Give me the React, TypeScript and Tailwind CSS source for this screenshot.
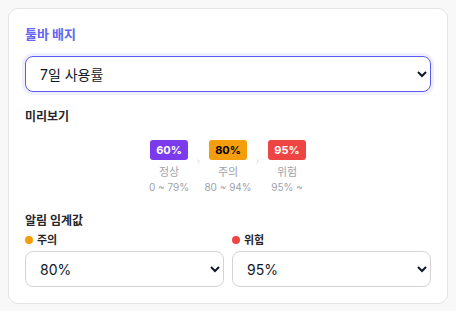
import { ChevronRight } from 'lucide-react'

const tiers = [
  { value: '60%', label: '정상', range: '0 ~ 79%', badge: 'bg-[#7c3aed] text-white' },
  { value: '80%', label: '주의', range: '80 ~ 94%', badge: 'bg-[#f59e0b] text-black' },
  { value: '95%', label: '위험', range: '95% ~', badge: 'bg-[#ef4444] text-white' },
]

export default function App() {
  return (
    <div
      className="min-h-[311px] bg-[#f8f8f8] p-2"
      style={{ fontFamily: 'Inter, "Noto Sans CJK KR", sans-serif' }}
    >
      <div className="rounded-[10px] border border-[#e4e4e7] bg-white px-4 pt-4 pb-4">
        <div className="text-[13px] font-bold leading-[18px] text-[#6366f1]">툴바 배지</div>
        <select
          defaultValue="7d"
          className="mt-[13px] block h-9 w-full rounded-lg border border-[#5b5bf0] bg-white pr-3 pl-[10px] text-[14px] text-[#111827] ring-[3px] ring-[#6366f1]/10 outline-none"
        >
          <option value="7d">7일 사용률</option>
          <option value="30d">30일 사용률</option>
        </select>

        <div className="mt-[15px] text-[12px] font-bold leading-5 text-[#27272a]">미리보기</div>
        <div className="mt-[13px] flex items-start justify-center gap-[7px]">
          {tiers.map((t, i) => (
            <div key={t.value} className="flex items-start gap-[7px]">
              {i > 0 ? (
                <ChevronRight className="mt-[18px] h-[7px] w-[7px] text-[#d4d4d8]" strokeWidth={3} />
              ) : null}
              <div className="flex w-[38px] flex-col items-center">
                <span
                  className={`flex h-5 w-[38px] items-center justify-center rounded-[3px] text-[11px] font-bold ${t.badge}`}
                >
                  {t.value}
                </span>
                <span className="mt-[4px] text-[11px] leading-4 text-[#a1a1aa]">{t.label}</span>
                <span className="whitespace-nowrap text-[10px] leading-[14px] text-[#a1a1aa]">
                  {t.range}
                </span>
              </div>
            </div>
          ))}
        </div>

        <div className="mt-[17px] text-[12px] font-bold leading-5 text-[#27272a]">알림 임계값</div>
        <div className="mt-[1px] grid grid-cols-2 gap-2">
          <ThresholdSelect dot="bg-[#f59e0b]" label="주의" value="80" />
          <ThresholdSelect dot="bg-[#ef4444]" label="위험" value="95" />
        </div>
      </div>
    </div>
  )
}

function ThresholdSelect({ dot, label, value }: { dot: string; label: string; value: string }) {
  return (
    <div className="flex flex-col">
      <div className="flex items-center gap-[4px] text-[11px] font-bold leading-4 text-[#27272a]">
        <span className={`h-[8px] w-[8px] rounded-full ${dot}`} />
        {label}
      </div>
      <select
        defaultValue={value}
        className="mt-[3px] block h-9 w-full rounded-lg border border-[#d4d4d8] bg-white pr-3 pl-[10px] text-[14px] text-[#111827] outline-none"
      >
        <option value="70">70%</option>
        <option value="80">80%</option>
        <option value="90">90%</option>
        <option value="95">95%</option>
      </select>
    </div>
  )
}
